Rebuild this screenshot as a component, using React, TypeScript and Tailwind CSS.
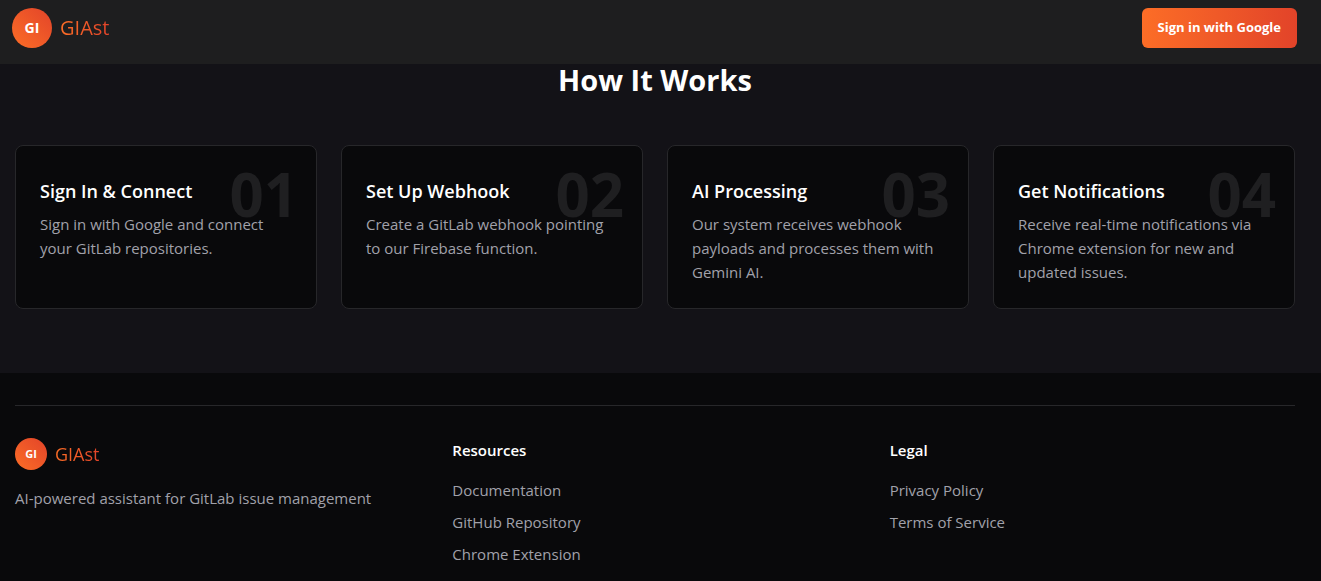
import React from "react";
import { clsx } from "clsx";

interface Step {
  number: string;
  title: string;
  description: string;
}

interface LinkGroup {
  title: string;
  links: string[];
}

const steps: Step[] = [
  {
    number: "01",
    title: "Sign In & Connect",
    description: "Sign in with Google and connect your GitLab repositories.",
  },
  {
    number: "02",
    title: "Set Up Webhook",
    description: "Create a GitLab webhook pointing to our Firebase function.",
  },
  {
    number: "03",
    title: "AI Processing",
    description:
      "Our system receives webhook payloads and processes them with Gemini AI.",
  },
  {
    number: "04",
    title: "Get Notifications",
    description:
      "Receive real-time notifications via Chrome extension for new and updated issues.",
  },
];

const linkGroups: LinkGroup[] = [
  {
    title: "Resources",
    links: ["Documentation", "GitHub Repository", "Chrome Extension"],
  },
  {
    title: "Legal",
    links: ["Privacy Policy", "Terms of Service"],
  },
];

interface LogoProps {
  small?: boolean;
}

const Logo: React.FC<LogoProps> = ({ small }) => (
  <a href="#" className="inline-flex items-center gap-2">
    <span
      className={clsx(
        "flex items-center justify-center rounded-full bg-linear-to-tr from-[#fc6d26] to-[#e24329] font-bold text-white",
        small ? "size-8 text-[11px]" : "size-10 text-sm"
      )}
    >
      GI
    </span>
    <span
      className={clsx(
        "bg-linear-to-r from-[#fc6d26] to-[#e24329] bg-clip-text text-transparent",
        small ? "text-lg" : "text-xl"
      )}
    >
      GIAst
    </span>
  </a>
);

const Header: React.FC = () => (
  <header className="flex items-center justify-between bg-[#1e1e1f] pt-2 pr-6 pb-4 pl-3">
    <Logo />
    <button
      type="button"
      className="h-10 rounded-md bg-linear-to-r from-[#fc6d26] to-[#e24329] px-4 text-[13px] font-bold text-white"
    >
      Sign in with Google
    </button>
  </header>
);

const StepCard: React.FC<{ step: Step }> = ({ step }) => (
  <li className="relative rounded-lg border border-[#27272a] bg-[#09090b] px-6 pt-8 pb-6">
    <span className="absolute top-[18px] right-[18px] text-6xl leading-none font-bold text-[#1f1f21]">
      {step.number}
    </span>
    <div className="relative">
      <h3 className="mb-2 text-lg leading-[26px] font-semibold text-white">
        {step.title}
      </h3>
      <p className="text-[15px] leading-6 text-[#a1a1aa]">{step.description}</p>
    </div>
  </li>
);

const HowItWorks: React.FC = () => (
  <section className="bg-[#131217] pr-[26px] pb-16 pl-[15px]">
    <h2 className="mb-[49px] text-center text-[29px] leading-8 font-bold text-white">
      How It Works
    </h2>
    <ol className="grid grid-cols-1 gap-6 sm:grid-cols-2 lg:grid-cols-4">
      {steps.map((step) => (
        <StepCard key={step.number} step={step} />
      ))}
    </ol>
  </section>
);

const Footer: React.FC = () => (
  <footer className="pt-8 pr-[26px] pb-4 pl-[15px]">
    <div className="grid grid-cols-1 gap-8 border-t border-[#27272a] pt-8 md:grid-cols-3">
      <div>
        <Logo small />
        <p className="mt-4 text-[15px] leading-6 text-[#a1a1aa]">
          AI-powered assistant for GitLab issue management
        </p>
      </div>
      {linkGroups.map((group) => (
        <nav key={group.title} aria-label={group.title}>
          <h3 className="mb-4 text-[15px] leading-6 font-semibold text-white">
            {group.title}
          </h3>
          <ul className="flex flex-col gap-2 text-[15px] leading-6 text-[#a1a1aa]">
            {group.links.map((link) => (
              <li key={link}>
                <a href="#" className="hover:text-white">
                  {link}
                </a>
              </li>
            ))}
          </ul>
        </nav>
      ))}
    </div>
  </footer>
);

export default function App() {
  return (
    <div className="min-h-screen bg-[#09090b] font-['Segoe_UI','Open_Sans',sans-serif]">
      <Header />
      <main>
        <HowItWorks />
      </main>
      <Footer />
    </div>
  );
}
